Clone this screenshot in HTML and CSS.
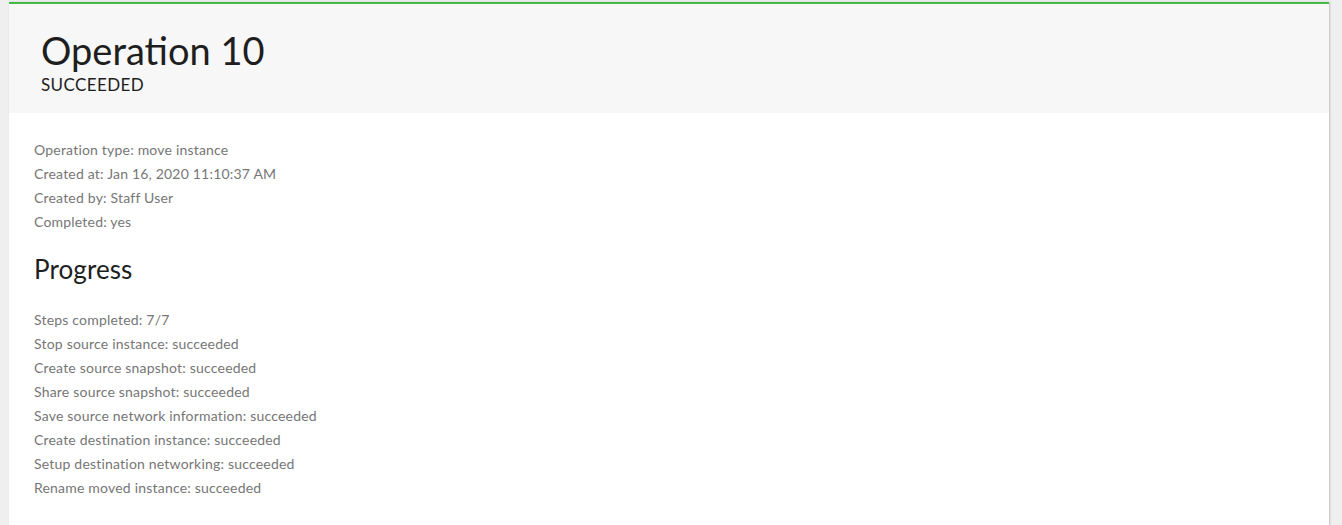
FILE: index.html
```html
<!DOCTYPE html>
<html>
<head>
<meta charset="utf-8">
<link rel="stylesheet" href="styles.css">
</head>
<body>
<div class="card">
  <header class="card-header">
    <h1 class="title">Operation 10</h1>
    <div class="status">SUCCEEDED</div>
  </header>
  <section class="card-body">
    <ul class="facts">
      <li>Operation type: move instance</li>
      <li>Created at: Jan 16, 2020 11:10:37 AM</li>
      <li>Created by: Staff User</li>
      <li>Completed: yes</li>
    </ul>
    <h2 class="section-title">Progress</h2>
    <ul class="facts">
      <li>Steps completed: 7/7</li>
      <li>Stop source instance: succeeded</li>
      <li>Create source snapshot: succeeded</li>
      <li>Share source snapshot: succeeded</li>
      <li>Save source network information: succeeded</li>
      <li>Create destination instance: succeeded</li>
      <li>Setup destination networking: succeeded</li>
      <li>Rename moved instance: succeeded</li>
    </ul>
  </section>
</div>
</body>
</html>
```
FILE: styles.css
```css
html, body {
  margin: 0;
  padding: 0;
  background: #efefef;
  font-family: Lato, "Open Sans", Arial, sans-serif;
}
body {
  padding: 2px 13px 0 9px;
  height: 523px;
  overflow: hidden;
}
.card {
  background: #ffffff;
  border-top: 2px solid #44bb44;
  box-shadow: 1px 0 2px rgba(0,0,0,0.2);
  min-height: 530px;
}
.card-header {
  background: #f7f7f7;
  padding: 26px 32px 18px 32px;
}
.title {
  margin: 0;
  font-size: 38px;
  font-weight: 400;
  line-height: 40px;
  color: #1e1e1e;
}
.status {
  margin-top: 5px;
  font-size: 17px;
  line-height: 20px;
  letter-spacing: 0.4px;
  color: #1e1e1e;
}
.card-body {
  padding: 25px 25px 0 25px;
}
.facts {
  list-style: none;
  margin: 0;
  padding: 0;
}
.facts li {
  font-size: 14px;
  line-height: 24px;
  letter-spacing: 0.2px;
  color: #767676;
}
.section-title {
  margin: 20px 0 24px 0;
  font-size: 26px;
  font-weight: 400;
  line-height: 30px;
  letter-spacing: 0.1px;
  color: #1e1e1e;
}
```
